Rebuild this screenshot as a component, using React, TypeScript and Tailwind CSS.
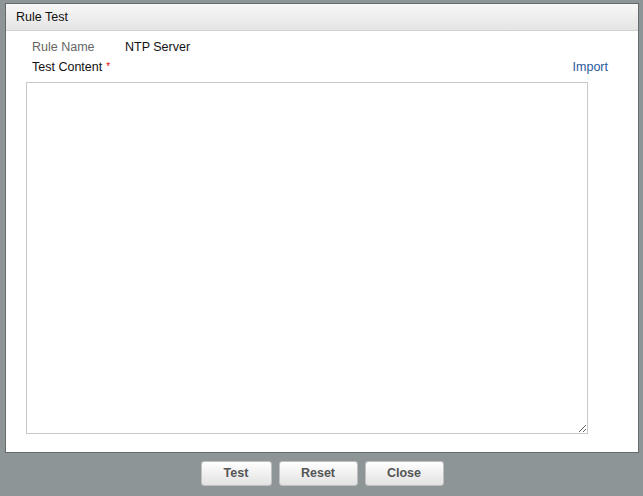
import React from "react";

export default function App() {
  const font = { fontFamily: '"Liberation Sans", Arial, Helvetica, sans-serif' };
  return (
    <div className="w-[643px] h-[496px] bg-[#8e9597] overflow-hidden flex flex-col" style={font}>
      <div className="ml-[5px] mt-[3px] w-[634px] h-[450px] bg-white border border-[#666a6c] flex flex-col">
        <div className="h-[27px] shrink-0 bg-gradient-to-b from-[#f7f7f7] to-[#e5e5e5] border-b border-[#d2d2d2] flex items-center pl-[10px] text-[12.5px] text-[#111]">
          Rule Test
        </div>
        <div className="flex flex-col pl-[20px] pr-[28px]">
          <div className="flex items-center h-[16px] mt-[8px] text-[12.5px]">
            <span className="w-[99px] pl-[6px] text-[#666]">Rule Name</span>
            <span className="text-[#111]">NTP Server</span>
          </div>
          <div className="flex items-center justify-between h-[16px] mt-[4px] text-[12.5px]">
            <span className="pl-[6px] text-[#111] flex items-center">
              Test Content<span className="text-[#d00] text-[10px] ml-[4px] -mt-[2px]">*</span>
            </span>
            <span className="text-[#2a5a9c] mr-[2px]">Import</span>
          </div>
          <textarea className="mt-[7px] w-[562px] h-[352px] border border-[#c8c8c8] outline-none resize" />
        </div>
      </div>
      <div className="flex justify-center gap-[7px] mt-[8px] pl-[1px]">
        <button className="w-[71px] h-[25px] rounded-[3px] border border-[#c0c0c0] bg-gradient-to-b from-white to-[#e2e2e2] text-[12.5px] font-bold text-[#555]">Test</button>
        <button className="w-[79px] h-[25px] rounded-[3px] border border-[#c0c0c0] bg-gradient-to-b from-white to-[#e2e2e2] text-[12.5px] font-bold text-[#555]">Reset</button>
        <button className="w-[79px] h-[25px] rounded-[3px] border border-[#c0c0c0] bg-gradient-to-b from-white to-[#e2e2e2] text-[12.5px] font-bold text-[#555]">Close</button>
      </div>
    </div>
  );
}
